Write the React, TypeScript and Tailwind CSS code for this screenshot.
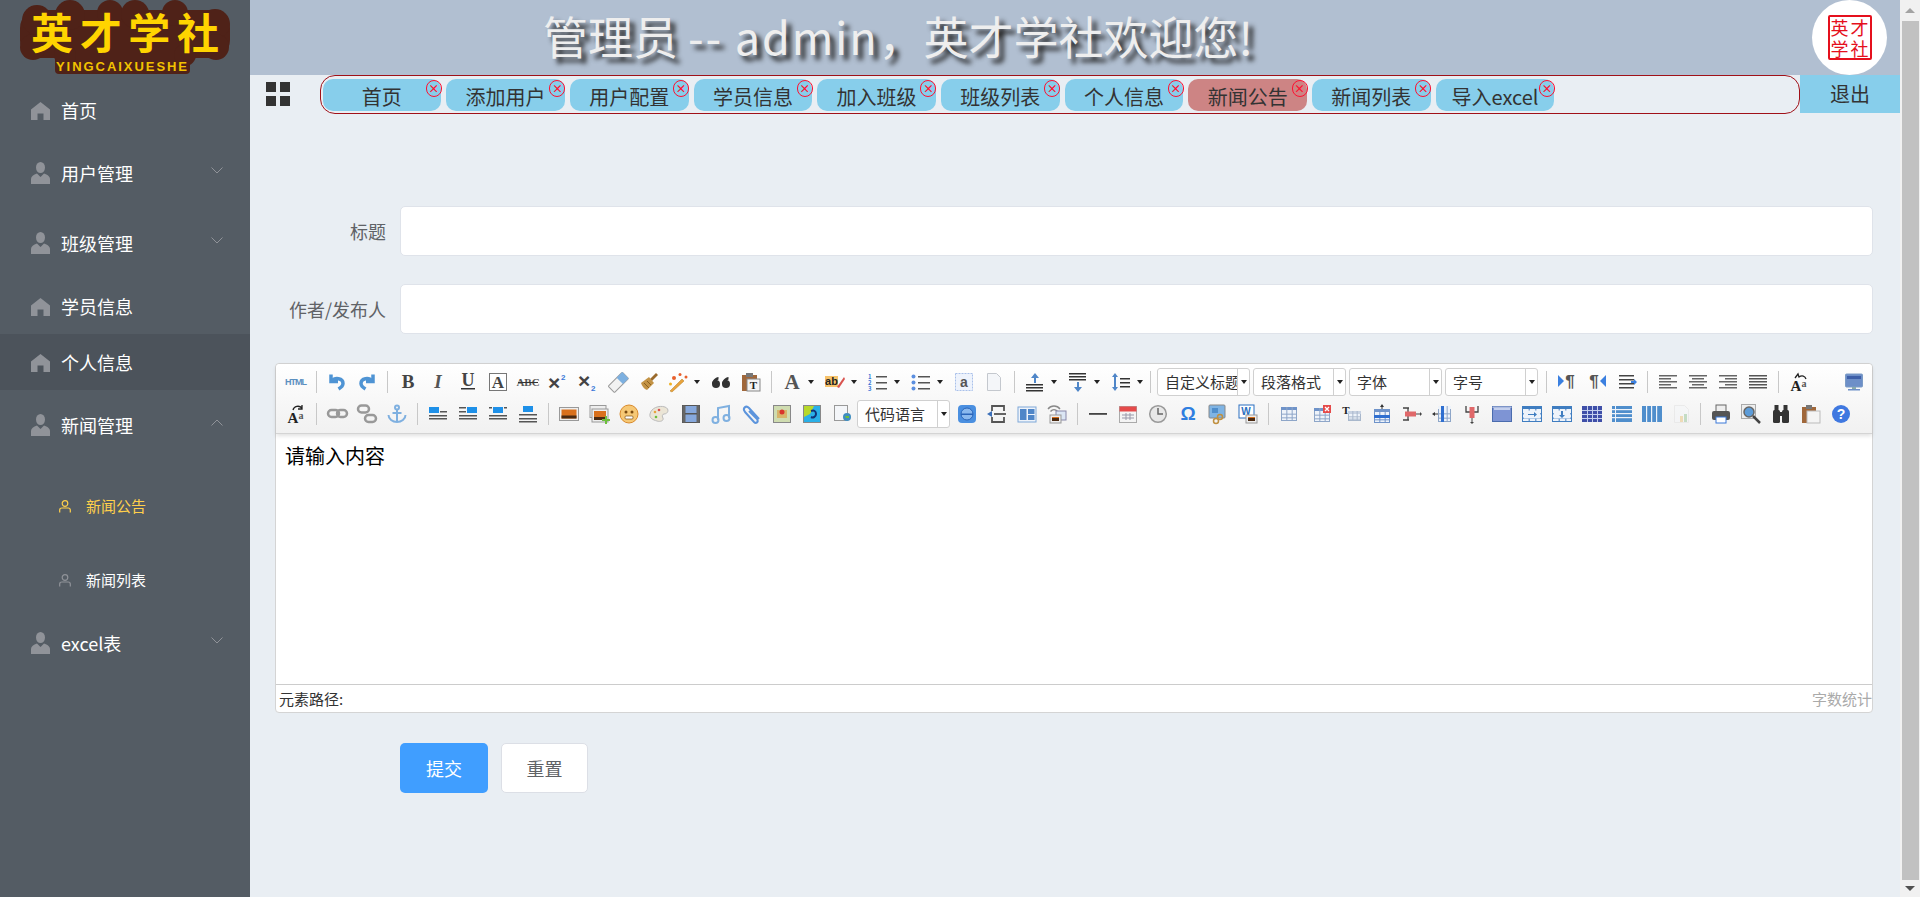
import type { ReactNode } from "react";

const tabs = ["首页", "添加用户", "用户配置", "学员信息", "加入班级", "班级列表", "个人信息", "新闻公告", "新闻列表", "导入excel"];

const HomeIcon = () => (
  <svg width="19" height="19" viewBox="0 0 19 19" fill="#909399">
    <path d="M9.5 1 19 8.6V19h-6.5v-6.500h-6V19H0V8.600z" />
  </svg>
);

const UserIcon = () => (
  <svg width="19" height="23" viewBox="0 0 19 23" fill="#909399">
    <ellipse cx="9.500" cy="5.500" rx="4.500" ry="5.500" />
    <path d="M6 11.500 9.500 15l3.500-3.500c3.500 1 6 3 6 5.500v5H0v-5c0-2.500 2.500-4.500 6-5.500z" />
  </svg>
);

const SubUser = ({ color }: { color: string }) => (
  <svg width="12" height="13" viewBox="0 0 12 13" fill="none" stroke={color} strokeWidth="1.200">
    <circle cx="6" cy="3.500" r="2.800" />
    <path d="M.7 12.500V10c0-1.300 1-2 2.200-2h6.200c1.200 0 2.200.7 2.200 2v2.500" />
  </svg>
);

const Chevron = ({ up }: { up?: boolean }) => (
  <svg width="12" height="7" viewBox="0 0 12 7" fill="none" stroke="#909399" strokeWidth="1">
    <path d={up ? "M.5 6.500 6 1l5.500 5.500" : "M.5.5 6 6 11.500.5"} />
  </svg>
);

const NavItem = ({ icon, label, arrow, active, tall }: { icon: ReactNode; label: string; arrow?: "up" | "down"; active?: boolean; tall?: boolean }) => (
  <div className={`flex items-center pl-[31px] pr-[27px] text-[18px] text-white ${tall ? "h-[70px]" : "h-[56px]"} ${active ? "bg-[#4c535b]" : ""}`}>
    <span className="flex w-[30px] shrink-0 items-center">{icon}</span>
    <span className="flex-1 leading-none">{label}</span>
    {arrow && <span className="flex -translate-y-[3px]"><Chevron up={arrow === "up"} /></span>}
  </div>
);

const Logo = () => (
  <svg width="250" height="75" viewBox="0 0 250 75">
    <g fill="#4f2218">
      <rect x="20" y="10" width="210" height="48" rx="18" />
      <rect x="55" y="48" width="135" height="26" rx="4" />
      <circle cx="37" cy="20" r="15" />
      <circle cx="33" cy="47" r="13" />
      <circle cx="70" cy="15" r="15" />
      <circle cx="110" cy="13" r="13" />
      <circle cx="135" cy="14" r="14" />
      <circle cx="175" cy="13" r="13" />
      <circle cx="215" cy="24" r="15" />
      <circle cx="216" cy="47" r="13" />
      <circle cx="65" cy="55" r="11" />
      <circle cx="185" cy="55" r="11" />
    </g>
    <text x="31" y="49" textLength="188" fontSize="42" fontWeight="700" fill="#ffd400" fontFamily="'Noto Sans CJK SC',sans-serif">英才学社</text>
    <text x="56" y="71" textLength="131" fontSize="13" fontWeight="700" fill="#f2c200" fontFamily="'Liberation Sans',sans-serif">YINGCAIXUESHE</text>
  </svg>
);

const Sidebar = () => (
  <aside className="flex h-full w-[250px] shrink-0 flex-col bg-[#545c64]">
    <div className="h-[82px] shrink-0"><Logo /></div>
    <NavItem icon={<HomeIcon />} label="首页" />
    <NavItem icon={<UserIcon />} label="用户管理" arrow="down" tall />
    <NavItem icon={<UserIcon />} label="班级管理" arrow="down" tall />
    <NavItem icon={<HomeIcon />} label="学员信息" />
    <NavItem icon={<HomeIcon />} label="个人信息" active />
    <NavItem icon={<UserIcon />} label="新闻管理" arrow="up" tall />
    <div className="flex h-[148px] flex-col gap-[18px] pt-[18px]">
      <div className="flex h-[56px] items-center pl-[59px] text-[15px] text-[#ffd04b]">
        <span className="w-[27px]"><SubUser color="#ffd04b" /></span>新闻公告
      </div>
      <div className="flex h-[56px] items-center pl-[59px] text-[15px] text-white">
        <span className="w-[27px]"><SubUser color="#909399" /></span>新闻列表
      </div>
    </div>
    <NavItem icon={<UserIcon />} label="excel表" arrow="down" tall />
  </aside>
);

const Tab = ({ label, active }: { label: string; active: boolean }) => (
  <div className={`relative flex h-[32px] w-[118.7px] shrink-0 items-center justify-center rounded-[10px] pt-[3px] text-[20px] leading-none text-[#333] ${active ? "bg-[#cd8484]" : "bg-[#87ceeb]"}`}>
    {label}
    <span className="absolute -right-[0.5px] top-[1px] flex h-[17px] w-[16px] items-center justify-center rounded-full border border-[#ff1030] text-[11px] font-bold leading-none text-[#ff1030]">×</span>
  </div>
);

// ---- toolbar icons
const Lines = ({ ys, x = 2, w = 16, c = "#555", h = 1.500 }: { ys: number[]; x?: number; w?: number; c?: string; h?: number }) => (
  <>{ys.map((y) => <rect key={y} x={x} y={y} width={w} height={h} fill={c} />)}</>
);

const TableBase = ({ x = 2, y = 3, w = 16, h = 14, c = "#8ea6c8", head = "#6f93c9" }: { x?: number; y?: number; w?: number; h?: number; c?: string; head?: string }) => (
  <>
    <rect x={x + 0.500} y={y + 0.500} width={w - 1} height={h - 1} fill="#eef3fa" stroke={c} />
    <rect x={x} y={y} width={w} height={3} fill={head} />
    {[1, 2].map((n) => <rect key={n} x={x + (w * n) / 3} y={y} width="1" height={h} fill={c} />)}
    {[1, 2].map((n) => <rect key={n} x={x} y={y + 3 + ((h - 3) * n) / 3} width={w} height="1" fill={c} />)}
  </>
);

const Serif = ({ t, x = 10, y = 15, s = 16, c = "#444", italic }: { t: string; x?: number; y?: number; s?: number; c?: string; italic?: boolean }) => (
  <text x={x} y={y} textAnchor="middle" fontSize={s} fontWeight="700" fontStyle={italic ? "italic" : "normal"} fill={c} fontFamily="'Liberation Serif',serif">{t}</text>
);

const ImgWrap = ({ bx, by, bw = 10, bh = 6, lines }: { bx: number; by: number; bw?: number; bh?: number; lines: [number, number, number][] }) => (
  <>
    <rect x={bx} y={by} width={bw} height={bh} fill="#1e90e8" />
    {lines.map(([x, y, w]) => <rect key={`${x}-${y}`} x={x} y={y} width={w} height="1.500" fill="#555" />)}
  </>
);

const Sunset = ({ x, y, w, h }: { x: number; y: number; w: number; h: number }) => (
  <>
    <rect x={x} y={y} width={w} height={h} fill="#eee" stroke="#999" strokeWidth="1" />
    <rect x={x + 2} y={y + 2} width={w - 4} height={h - 4} fill="#d9701c" />
    <rect x={x + 2} y={y + h - 5} width={w - 4} height="3" fill="#4a2a12" />
  </>
);

const icons: Record<string, ReactNode> = {
  html: <text x="10" y="13" textAnchor="middle" textLength="22" fontSize="9" fontWeight="700" fill="#5b8fc0" fontFamily="'Liberation Sans',sans-serif">HTML</text>,
  undo: <g fill="none" stroke="#4f94d4" strokeWidth="3.500"><path d="M4 2.500v7h7" /><path d="M5 9c3-4 11-3 11 2.500 0 2.500-2 4-4.500 5.500" /></g>,
  redo: <g fill="none" stroke="#4f94d4" strokeWidth="3.500"><path d="M16 2.500v7H9" /><path d="M15 9c-3-4-11-3-11 2.500 0 2.500 2 4 4.500 5.500" /></g>,
  bold: <Serif t="B" s="19" y="16" />,
  italic: <Serif t="I" s="19" y="16" italic c="#555" />,
  underline: <><Serif t="U" s="18" y="14" /><rect x="3" y="16" width="14" height="1.500" fill="#333" /></>,
  fontborder: <><rect x="1.500" y="1.500" width="17" height="17" fill="#fff" stroke="#777" /><Serif t="A" s="17" y="16" /></>,
  strike: <><Serif t="ABC" s="11" y="14" c="#555" /><rect x="0" y="10" width="20" height="1" fill="#333" /></>,
  sup: <><text x="0" y="18" fontSize="21" fontWeight="700" fill="#444" fontFamily="'Liberation Sans',sans-serif">×</text><text x="13" y="8" fontSize="8" fontWeight="700" fill="#3b78d8" fontFamily="'Liberation Sans',sans-serif">2</text></>,
  sub: <><text x="0" y="16" fontSize="21" fontWeight="700" fill="#444" fontFamily="'Liberation Sans',sans-serif">×</text><text x="13" y="19" fontSize="8" fontWeight="700" fill="#3b78d8" fontFamily="'Liberation Sans',sans-serif">2</text></>,
  eraser: <g transform="rotate(-45 10 10)"><rect x="0" y="6" width="20" height="9" rx="1" fill="#f2f2f2" stroke="#999" /><rect x="12" y="6" width="8" height="9" fill="#7db0e0" /></g>,
  brush: <g><path d="M12 7 18 1l2 2-6 6z" fill="#9a6a2c" /><path d="M3 11 11 5l5 6-7 7c-3-1-5-4-6-7z" fill="#c39345" /><path d="M6 11l5 5M9 9l4 4" stroke="#8a6020" /></g>,
  wand: <g><path d="M2 19 14 7l2 2L4 20z" fill="#e8a33c" stroke="#b27a20" strokeWidth=".5" /><circle cx="6" cy="6" r="2" fill="#e8602c" /><circle cx="12" cy="2.500" r="1.500" fill="#e8602c" /><circle cx="18" cy="5" r="1.500" fill="#e8602c" /><circle cx="2.500" cy="12" r="1.500" fill="#f0b020" /></g>,
  quote: <g fill="#333"><circle cx="5" cy="12" r="4" /><circle cx="15" cy="12" r="4" /><path d="M1 12C1.500 8 4 5.500 7.500 5v2.500C5.500 8 5 10 5 12zM11 12c.5-4 3-6.500 6.500-7v2.500c-2 .5-2.500 2.500-2.500 4.500z" /></g>,
  paste: <g><rect x="1" y="3" width="15" height="16" fill="#a0673a" /><rect x="5" y="1" width="7" height="4" fill="#777" /><rect x="6" y="7" width="13" height="12" fill="#f4f4f4" stroke="#888" /><Serif t="T" s="11" x="12.500" y="17" c="#222" /></g>,
  forecolor: <Serif t="A" s="21" y="17" c="#555" />,
  highlight: <g><rect x="0" y="4" width="13" height="11" fill="#f6c26a" /><text x="6.500" y="13" textAnchor="middle" fontSize="11" fontWeight="700" fill="#222" fontFamily="'Liberation Sans',sans-serif">ab</text><path d="M12 15 19 5l1 2-6 9z" fill="#d9534f" /></g>,
  ol: <g><Lines ys={[4, 10, 16]} x={8} w={11} /><text x="0" y="6.500" fontSize="6" fontWeight="700" fill="#3b78d8">1</text><text x="0" y="12.500" fontSize="6" fontWeight="700" fill="#3b78d8">2</text><text x="0" y="18.500" fontSize="6" fontWeight="700" fill="#3b78d8">3</text></g>,
  ul: <g><Lines ys={[4, 10, 16]} x={7} w={12} /><circle cx="2.500" cy="4.500" r="2" fill="#5b8fe0" /><circle cx="2.500" cy="10.500" r="2" fill="#5b8fe0" /><circle cx="2.500" cy="16.500" r="2" fill="#5b8fe0" /></g>,
  selectall: <g><rect x="1.500" y="1.500" width="17" height="17" fill="#eef3fc" stroke="#a9c0ea" strokeDasharray="2 1" /><text x="10" y="14.500" textAnchor="middle" fontSize="14" fontWeight="700" fill="#555" fontFamily="'Liberation Sans',sans-serif">a</text></g>,
  newdoc: <path d="M3.500 1.500h9l4 4v13h-13z" fill="#f4f6f9" stroke="#c4c8ce" />,
  spacetop: <g><path d="M10 1 6 6h3v5h2V6h3z" fill="#4f86c8" /><Lines ys={[12, 15, 18]} w={17} c="#333" x={1} /></g>,
  spacebottom: <g><Lines ys={[1, 4, 7]} w={17} c="#333" x={1} /><path d="M10 20l-4-5h3V10h2v5h3z" fill="#4f86c8" /></g>,
  lineheight: <g><Lines ys={[6, 10, 14]} x={9} w={10} c="#333" /><path d="M4 1 1 5h2v10H1l3 4 3-4H5V5h2z" fill="#4f86c8" /></g>,
  ltr: <g><path d="M1 3l6 6-6 6z" fill="#3b80e0" /><text x="13" y="15" textAnchor="middle" fontSize="17" fontWeight="700" fill="#555" fontFamily="'Liberation Sans',sans-serif">¶</text></g>,
  rtl: <g><path d="M19 3l-6 6 6 6z" fill="#3b80e0" /><text x="7" y="15" textAnchor="middle" fontSize="17" fontWeight="700" fill="#555" fontFamily="'Liberation Sans',sans-serif">¶</text></g>,
  indent: <g><Lines ys={[3, 7, 11, 15]} x={2} w={15} c="#444" /><path d="M14 9h3V7l3 3-3 3v-2h-3z" fill="#3b80e0" /></g>,
  left: <g><Lines ys={[3, 9, 15]} w={18} x={1} c="#666" /><Lines ys={[6, 12]} w={12} x={1} c="#666" /></g>,
  center: <g><Lines ys={[3, 9, 15]} w={18} x={1} c="#666" /><Lines ys={[6, 12]} w={12} x={4} c="#666" /></g>,
  right: <g><Lines ys={[3, 9, 15]} w={18} x={1} c="#666" /><Lines ys={[6, 12]} w={12} x={7} c="#666" /></g>,
  justify: <Lines ys={[3, 6, 9, 12, 15]} w={18} x={1} c="#555" />,
  caseUp: <g><Serif t="A" s="15" x="7" y="19" c="#222" /><text x="15" y="15" textAnchor="middle" fontSize="10" fontWeight="700" fill="#555" fontFamily="'Liberation Serif',serif">a</text><path d="M6 6 9 2l1 3c3-2 6-1 7 2" fill="none" stroke="#222" strokeWidth="1.300" /></g>,
  caseDown: <g><Serif t="A" s="15" x="7" y="19" c="#222" /><text x="15" y="15" textAnchor="middle" fontSize="10" fontWeight="700" fill="#555" fontFamily="'Liberation Serif',serif">a</text><path d="M7 6c1-4 6-5 9-2m0-3v4h-4" fill="none" stroke="#222" strokeWidth="1.300" /></g>,
  full: <g><rect x="1.500" y="2" width="17" height="13" rx="1" fill="#6d8fc8" stroke="#7c9cc6" /><rect x="3" y="4" width="14" height="3" fill="#3d5fa8" /><rect x="8" y="15" width="4" height="2" fill="#8aa" /><rect x="4" y="17" width="12" height="1.500" fill="#6d8fc8" /></g>,
  link: <g fill="none" stroke="#999" strokeWidth="2.500"><rect x="1" y="6" width="11" height="7" rx="3.500" /><rect x="10" y="6" width="10" height="7" rx="3.500" /></g>,
  unlink: <g fill="none" stroke="#999" strokeWidth="2.500"><rect x="1" y="1.500" width="11" height="7" rx="3.500" /><rect x="8" y="11" width="11" height="7" rx="3.500" /></g>,
  anchor: <g fill="none" stroke="#7fb0e0" strokeWidth="2"><circle cx="10" cy="3.500" r="2" /><path d="M10 6v13M5.500 9h9M1.500 11c0 4 4 7 8.500 7s8.500-3 8.500-7" /></g>,
  imgLeft: <ImgWrap bx={1} by={3} lines={[[12, 7, 7], [1, 11, 18], [1, 14, 18]]} />,
  imgRight: <ImgWrap bx={9} by={3} lines={[[1, 3, 7], [1, 7, 7], [1, 11, 18], [1, 14, 18]]} />,
  imgNone: <ImgWrap bx={5} by={3} lines={[[1, 3, 3], [16, 3, 3], [1, 11, 18], [1, 14, 18]]} />,
  imgCenter: <ImgWrap bx={5} by={2} lines={[[1, 10, 18], [1, 14, 18], [1, 17, 18]]} />,
  image: <Sunset x={.5} y={3.500} w={19} h={13} />,
  multi: <g><rect x="1" y="1.500" width="16" height="12" fill="#eee" stroke="#999" /><Sunset x={3} y={5} w={16} h={13} /><path d="M15 15h3v-3h2v3h3v2h-3v3h-2v-3h-3z" fill="#6cbf3c" transform="translate(-2 0)" /></g>,
  emoji: <g><circle cx="10" cy="10" r="9" fill="#f6c875" stroke="#d98a2c" /><circle cx="7" cy="8" r="1.500" fill="#7a4a10" /><circle cx="13" cy="8" r="1.500" fill="#7a4a10" /><rect x="6" y="12" width="8" height="3" rx="1" fill="#fff" stroke="#7a4a10" strokeWidth=".7" /></g>,
  palette: <g><path d="M1 10C2 4 10 1 16 3c5 2 3 7-1 7-2 0-2 3-1 4 1 3-3 4-6 3-4-1-8-3-7-7z" fill="#ebe5d6" stroke="#bbb" /><circle cx="6" cy="8" r="1.300" fill="#e8a33c" /><circle cx="10" cy="6" r="1.300" fill="#d9534f" /><circle cx="7" cy="13" r="1.300" fill="#6cbf3c" /></g>,
  video: <g><rect x="1.500" y="1.500" width="17" height="17" fill="#86a8dc" stroke="#555" /><rect x="1.500" y="1.500" width="3" height="17" fill="#666" /><rect x="15.500" y="1.500" width="3" height="17" fill="#666" /><rect x="4" y="9" width="12" height="1.500" fill="#555" /></g>,
  music: <g fill="none" stroke="#7fb0e0" strokeWidth="2"><path d="M7 16V4l11-2v12" /><circle cx="4.500" cy="16" r="3" /><circle cx="15.500" cy="14" r="3" /></g>,
  clip: <path d="M17 15 7 4C4 1 0 4 3 8l9 10c2 2 5 0 3-3L7 7" fill="none" stroke="#5c94dc" strokeWidth="2" />,
  map: <g><rect x="1.500" y="1.500" width="17" height="17" fill="#cfdcb0" stroke="#888" /><path d="M5 6h10v8H5z" fill="#d7b46a" /><circle cx="10" cy="8" r="2.500" fill="#d9342c" /></g>,
  gmap: <g><rect x="1.500" y="1.500" width="17" height="17" fill="#2ab0e8" stroke="#888" /><path d="M2 2h10l-4 8-6 3z" fill="#b7d82a" /><path d="M9 7c3-1 5 0 5 3s-3 4-5 3" fill="none" stroke="#137" strokeWidth="2" /></g>,
  iframe: <g><rect x="1.500" y="1.500" width="13" height="15" fill="#f4f6f9" stroke="#999" /><circle cx="14" cy="13" r="4" fill="#3f8dc0" /><path d="M12 12h4v2h-3z" fill="#6cbf3c" /></g>,
  insertcode: <g><rect x="1" y="1" width="18" height="18" rx="4" fill="#4a8fe0" /><circle cx="10" cy="10" r="6" fill="#8ab8ee" stroke="#2a64b8" /><rect x="4" y="9.500" width="12" height="1.500" fill="#2a64b8" /></g>,
  pagebreak: <g fill="none" stroke="#555" strokeWidth="1.800"><path d="M5 7V2h12v5M5 13v5h12v-5" /><path d="M7 10h12" /><path d="M0 10l5-3v6z" fill="#3b6fb8" stroke="none" /></g>,
  template: <g><rect x="1" y="3" width="18" height="15" fill="#eef3fa" stroke="#7fa8d8" /><rect x="3" y="5" width="6.500" height="11" fill="#4f86c8" /><rect x="11" y="5" width="6.500" height="5" fill="#4f86c8" /><rect x="11" y="11" width="6.500" height="5" fill="#4f86c8" /></g>,
  background: <g><path d="M1 5c3-4 9-4 12 0M3.500 7.500c2-2.500 5-2.500 7 0" fill="none" stroke="#888" strokeWidth="1.300" /><rect x="9" y="7" width="10" height="9" fill="#dbe6f4" stroke="#88a" /><Sunset x={3} y={11} w={11} h={8} /></g>,
  hr: <rect x="1" y="9" width="18" height="1.800" fill="#444" />,
  date: <g><rect x="1.500" y="2.500" width="17" height="16" fill="#f4f4f4" stroke="#aaa" /><rect x="1.500" y="2.500" width="17" height="5" fill="#e54a4a" /><path d="M4 11h12M4 14h12M8 9v7M12 9v7" stroke="#99a" /></g>,
  time: <g fill="none"><circle cx="10" cy="10" r="8.300" fill="#e8e8e8" stroke="#999" strokeWidth="1.500" /><path d="M10 4v6h5" stroke="#666" strokeWidth="1.500" /></g>,
  omega: <text x="10" y="16" textAnchor="middle" fontSize="19" fontWeight="700" fill="#2f7ee0" fontFamily="'Liberation Sans',sans-serif">Ω</text>,
  wordimg: <g><rect x="1" y="1" width="16" height="13" rx="1" fill="#7fb4e4" stroke="#888" /><path d="M4 4h6v5H4z" fill="#4f8ecc" /><g fill="none" stroke="#c09040" strokeWidth="1.500"><circle cx="12" cy="13" r="2.500" /><circle cx="8" cy="17" r="2.500" /></g></g>,
  word: <g><rect x="1" y="1" width="15" height="13" fill="#fff" stroke="#2a6fc0" /><text x="8" y="11" textAnchor="middle" fontSize="10" fontWeight="700" fill="#2a6fc0" fontFamily="'Liberation Sans',sans-serif">W</text><Sunset x={8} y={11} w={11} h={8} /></g>,
  table: <TableBase />,
  tableDel: <g><TableBase y={4} /><rect x="11" y="1" width="8" height="8" fill="#e54a4a" /><path d="M13 3l4 4m0-4-4 4" stroke="#fff" strokeWidth="1.300" /></g>,
  tableT: <g><TableBase x={6} y={7} w={13} h={10} c="#a9b8cc" head="#c8d2e2" /><text x="4" y="10" textAnchor="middle" fontSize="11" fontWeight="700" fill="#222" fontFamily="'Liberation Serif',serif">T</text></g>,
  rowIns: <g><TableBase y={5} h={14} c="#6f93c9" /><rect x="2" y="11" width="16" height="3" fill="#2f6fd0" /><path d="M10 0l-2 3h1.500v2h1V3H12z" fill="#333" /></g>,
  rowDel: <g><path d="M1 4h6M1 16h6M6 4v12" fill="none" stroke="#444" strokeWidth="1.300" /><rect x="3" y="7.500" width="11" height="5" fill="#e0686a" /><path d="M14 9.500h4V8l2 2-2 2v-1.500h-4z" fill="#444" /></g>,
  colIns: <g><TableBase x={6} y={2} w={13} h={16} c="#8ea6c8" head="#eef3fa" /><rect x="9" y="2" width="3" height="16" fill="#2f6fd0" /><path d="M0 10l3-2v1.500h3v1H3V12z" fill="#333" /></g>,
  colDel: <g><path d="M4 2v6h12V2" fill="none" stroke="#444" strokeWidth="1.300" /><rect x="7.500" y="3" width="5" height="11" fill="#e0686a" /><path d="M9.500 14v4H8l2 2 2-2h-1.500v-4z" fill="#444" /></g>,
  merge: <g><rect x=".5" y="2.500" width="19" height="15" fill="#7e94d4" stroke="#4a6cae" /><rect x="2" y="4" width="16" height="2" fill="#c4d0ee" /><rect x=".5" y="2.500" width="19" height="1.500" fill="#aebce0" /></g>,
  mergeR: <g><TableBase x={0} y={2} w={20} h={16} c="#3f7dc0" head="#3f7dc0" /><rect x="2" y="6.500" width="16" height="8" fill="#eef3fa" /><path d="M6 10h6V8l3 2.500-3 2.500v-2H6z" fill="#3f7dc0" /></g>,
  mergeD: <g><TableBase x={0} y={2} w={20} h={16} c="#3f7dc0" head="#3f7dc0" /><rect x="2" y="6.500" width="16" height="8" fill="#eef3fa" /><path d="M9 7h2v4h2l-3 3-3-3h2z" fill="#3f7dc0" /></g>,
  splitAll: <g><rect x="0" y="2" width="20" height="16" fill="#3f4fa8" /><Lines ys={[6, 10, 14]} x={0} w={20} c="#c4d0ee" h={1} /><rect x="5" y="2" width="1" height="16" fill="#c4d0ee" /><rect x="10" y="2" width="1" height="16" fill="#c4d0ee" /><rect x="15" y="2" width="1" height="16" fill="#c4d0ee" /></g>,
  splitR: <g><rect x="0" y="2" width="20" height="16" fill="#4f8ecc" /><Lines ys={[5, 9, 13]} x={0} w={20} c="#eef3fa" h={1.200} /><rect x="3" y="2" width="1" height="16" fill="#eef3fa" /></g>,
  splitC: <g><rect x="0" y="2" width="20" height="16" fill="#4f8ecc" /><rect x="4" y="2" width="1.200" height="16" fill="#eef3fa" /><rect x="9" y="2" width="1.200" height="16" fill="#eef3fa" /><rect x="14" y="2" width="1.200" height="16" fill="#eef3fa" /></g>,
  chart: <g opacity=".45"><path d="M2.500 1.500h10l4 4v13h-14z" fill="#f4f6f9" stroke="#ddd" /><rect x="8" y="12" width="3" height="6" fill="#e8c070" /><rect x="12" y="10" width="3" height="8" fill="#8cc08c" /></g>,
  print: <g><rect x="5" y="1" width="10" height="7" fill="#eee" stroke="#666" /><rect x="1" y="7" width="18" height="9" rx="2" fill="#555" /><rect x="5" y="13" width="10" height="6" fill="#fff" stroke="#3b78d8" /></g>,
  preview: <g><rect x=".5" y=".5" width="14" height="14" fill="#eee" stroke="#aaa" /><circle cx="8" cy="8" r="5" fill="#5d9cd8" stroke="#666" strokeWidth="1.500" /><path d="M12 12l7 7" stroke="#444" strokeWidth="2.500" /></g>,
  search: <g fill="#333"><rect x="2" y="6" width="7" height="13" rx="1.500" /><rect x="11" y="6" width="7" height="13" rx="1.500" /><rect x="3.500" y="1" width="4" height="6" /><rect x="12.500" y="1" width="4" height="6" /><rect x="8" y="8" width="4" height="4" /></g>,
  pasteplain: <g><rect x="1" y="3" width="14" height="16" fill="#a0673a" /><rect x="5" y="1" width="6" height="4" fill="#777" /><rect x="6" y="7" width="13" height="12" fill="#f4f4f4" stroke="#bbb" /></g>,
  help: <g><circle cx="10" cy="10" r="9" fill="#3f78e0" /><text x="10" y="15" textAnchor="middle" fontSize="14" fontWeight="700" fill="#fff" fontFamily="'Liberation Sans',sans-serif">?</text></g>,
};

const Btn = ({ i, caret, className = "" }: { i: string; caret?: boolean; className?: string }) => (
  <>
    <span className={`flex h-[20px] w-[30px] shrink-0 items-center justify-center ${className}`}>
      <svg width="20" height="20" viewBox="0 0 20 20" className="overflow-visible">{icons[i]}</svg>
    </span>
    {caret && (
      <span className="flex w-[13px] shrink-0 items-center pl-[1px]">
        <span className="h-0 w-0 border-x-[3.500px] border-t-[4px] border-x-transparent border-t-[#222]" />
      </span>
    )}
  </>
);

const Sep = ({ className = "" }: { className?: string }) => (
  <span className={`flex h-[22px] w-[11px] shrink-0 justify-center ${className}`}>
    <span className="h-full w-[1px] bg-[#c8c8c8]" />
  </span>
);

const Select = ({ label, className = "" }: { label: string; className?: string }) => (
  <span className={`flex h-[28px] w-[93px] shrink-0 items-center rounded-[3px] border border-[#d0d0d0] bg-white text-[15px] leading-[22px] text-[#333] ${className}`}>
    <span className="min-w-0 flex-1 overflow-hidden whitespace-nowrap pl-[7px]">{label}</span>
    <span className="flex h-full w-[12px] shrink-0 items-center justify-center border-l border-[#d0d0d0]">
      <span className="h-0 w-0 border-x-[3.500px] border-t-[4px] border-x-transparent border-t-[#222]" />
    </span>
  </span>
);

const Toolbar = () => (
  <div className="flex h-[70px] flex-col gap-[2px] rounded-t-[4px] border-b border-[#d4d4d4] bg-linear-to-b from-white to-[#f1f1f1] pl-[5px] pt-[3px] shadow-[0_2px_4px_rgba(0,0,0,0.12)]">
    <div className="flex h-[29px] items-center">
      <Btn i="html" /><Sep />
      <Btn i="undo" /><Btn i="redo" /><Sep />
      <Btn i="bold" /><Btn i="italic" /><Btn i="underline" /><Btn i="fontborder" /><Btn i="strike" />
      <Btn i="sup" /><Btn i="sub" /><Btn i="eraser" /><Btn i="brush" /><Btn i="wand" caret /><Btn i="quote" /><Btn i="paste" /><Sep />
      <Btn i="forecolor" caret /><Btn i="highlight" caret /><Btn i="ol" caret /><Btn i="ul" caret /><Btn i="selectall" /><Btn i="newdoc" /><Sep />
      <Btn i="spacetop" caret /><Btn i="spacebottom" caret /><Btn i="lineheight" caret /><Sep className="-ml-[4px]" />
      <Select label="自定义标题" className="ml-[1px]" />
      <Select label="段落格式" className="ml-[3px]" />
      <Select label="字体" className="ml-[3px]" />
      <Select label="字号" className="ml-[3px]" />
      <Sep className="ml-[3px]" />
      <Btn i="ltr" /><Btn i="rtl" /><Btn i="indent" /><Sep />
      <Btn i="left" /><Btn i="center" /><Btn i="right" /><Btn i="justify" /><Sep />
      <Btn i="caseUp" />
      <span className="w-[25px] shrink-0" />
      <Btn i="full" />
    </div>
    <div className="flex h-[31px] items-center">
      <Btn i="caseDown" /><Sep />
      <Btn i="link" /><Btn i="unlink" /><Btn i="anchor" /><Sep />
      <Btn i="imgLeft" /><Btn i="imgRight" /><Btn i="imgNone" /><Btn i="imgCenter" /><Sep />
      <Btn i="image" /><Btn i="multi" /><Btn i="emoji" /><Btn i="palette" /><Btn i="video" className="ml-[2px]" /><Btn i="music" /><Btn i="clip" className="ml-[1px]" /><Btn i="map" /><Btn i="gmap" /><Btn i="iframe" className="ml-[1px]" />
      <Select label="代码语言" className="-ml-[1px]" />
      <Btn i="insertcode" className="ml-[2px]" /><Btn i="pagebreak" /><Btn i="template" /><Btn i="background" /><Sep />
      <Btn i="hr" /><Btn i="date" /><Btn i="time" /><Btn i="omega" /><Btn i="wordimg" /><Btn i="word" /><Sep />
      <Btn i="table" /><Btn i="tableDel" className="ml-[3px]" /><Btn i="tableT" /><Btn i="rowIns" /><Btn i="rowDel" /><Btn i="colIns" /><Btn i="colDel" />
      <Btn i="merge" /><Btn i="mergeR" /><Btn i="mergeD" /><Btn i="splitAll" /><Btn i="splitR" /><Btn i="splitC" /><Btn i="chart" /><Sep className="-ml-[2px]" />
      <Btn i="print" /><Btn i="preview" /><Btn i="search" /><Btn i="pasteplain" /><Btn i="help" />
    </div>
  </div>
);

const Field = ({ label }: { label: string }) => (
  <div className="flex items-center pl-[25px] pr-[27px]">
    <label className="w-[111px] shrink-0 text-right text-[18px] text-[#606266]">{label}</label>
    <div className="ml-[14px] h-[50px] flex-1 rounded-[5px] border border-[#dfe3ea] bg-white" />
  </div>
);

const App = () => {
  return (
    <div className="flex h-[897px] w-[1920px] overflow-hidden bg-[#e9eef3] font-['Noto_Sans_CJK_SC','Liberation_Sans',sans-serif]">
      <Sidebar />
      <main className="flex min-w-0 flex-1 flex-col">
        <header className="flex h-[75px] shrink-0 items-center bg-[#b1bfd1] pl-[293px] pr-[13px]">
          <h1 className="flex-1 -translate-y-[2px] whitespace-nowrap text-[45px] font-normal leading-none text-[#eeeeee] [text-shadow:5px_5px_5px_#222]">
            管理员 <span className="tracking-[1.8px]">-- admin</span>，英才学社欢迎您!
          </h1>
          <div className="flex h-[75px] w-[75px] items-center justify-center rounded-full bg-white">
            <div className="grid h-[45px] w-[44px] grid-cols-2 place-items-center rounded-[2px] border-2 border-[#e5101d] text-[18px] leading-none text-[#e5101d]">
              <span>英</span><span>才</span><span>学</span><span>社</span>
            </div>
          </div>
        </header>
        <div className="flex h-[39px] shrink-0">
          <div className="w-[70px] pl-[16px] pt-[7px]">
            <div className="grid w-[24px] grid-cols-2 gap-[4px]">
              <span className="h-[10px] w-[10px] bg-[#333]" /><span className="h-[10px] w-[10px] bg-[#333]" />
              <span className="h-[10px] w-[10px] bg-[#333]" /><span className="h-[10px] w-[10px] bg-[#333]" />
            </div>
          </div>
          <div className="flex w-[1480px] gap-[5px] rounded-[15px] border border-[#a01018] pl-[1.500px] pt-[3px]">
            {tabs.map((t) => <Tab key={t} label={t} active={t === "新闻公告"} />)}
          </div>
          <div className="flex h-[38px] flex-1 items-center justify-center bg-[#87ceeb] text-[20px] text-[#333]">退出</div>
        </div>
        <form className="flex flex-col gap-[28px] pt-[92px]">
          <Field label="标题" />
          <Field label="作者/发布人" />
        </form>
        <div className="ml-[25px] mr-[27px] mt-[29px] flex h-[350px] flex-col rounded-[4px] border border-[#d4d4d4] bg-white">
          <Toolbar />
          <div className="h-[250px] px-[9px] pt-[8px] text-[20px] leading-[28px] text-black">请输入内容</div>
          <div className="flex flex-1 items-center justify-between border-t border-[#ccc] pl-[3px] text-[15px] leading-none">
            <span className="text-[#333]">元素路径:</span>
            <span className="text-[#aaa]">字数统计</span>
          </div>
        </div>
        <div className="ml-[150px] mt-[30px] flex gap-[13px]">
          <button type="button" className="h-[50px] w-[88px] rounded-[5px] bg-[#409eff] text-[18px] text-white">提交</button>
          <button type="button" className="h-[50px] w-[87px] rounded-[5px] border border-[#dcdfe6] bg-white text-[18px] text-[#606266]">重置</button>
        </div>
      </main>
      <div className="flex w-[20px] shrink-0 flex-col items-center bg-[#f1f1f1]">
        <span className="flex h-[21px] items-center justify-center"><span className="h-0 w-0 border-x-[5px] border-b-[5px] border-x-transparent border-b-[#a3a3a3]" /></span>
        <div className="h-[859px] w-[17px] bg-[#c1c1c1]" />
        <span className="flex h-[17px] items-center justify-center"><span className="h-0 w-0 border-x-[5px] border-t-[5px] border-x-transparent border-t-[#505050]" /></span>
      </div>
    </div>
  );
};

export default App;
